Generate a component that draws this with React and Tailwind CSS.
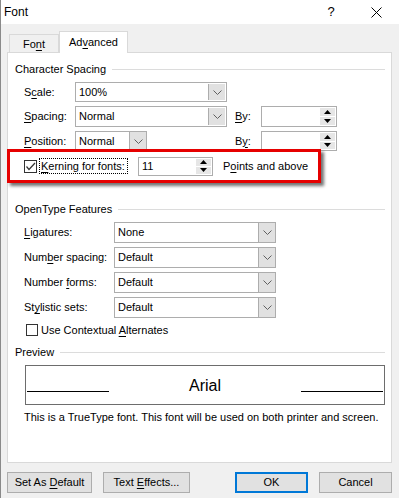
import React from "react";

const Chevron = () => (
  <svg width="9" height="5" viewBox="0 0 9 5">
    <polyline points="0.5,0.5 4.5,4.5 8.5,0.5" fill="none" stroke="#606060" strokeWidth="1" />
  </svg>
);

function Combo({ value, width, editable }) {
  return (
    <div className={`flex h-full border border-[#adadad] bg-white ${width}`}>
      <div className="flex-1 flex items-center pl-[3px]">
        <span>{value}</span>
      </div>
      <div
        className={`w-[17px] flex items-center justify-center bg-[#e1e1e1] border-l border-[#adadad] ${
          editable ? "m-px" : ""
        }`}
      >
        <Chevron />
      </div>
    </div>
  );
}

function Spin({ value, width, height }) {
  return (
    <div className={`flex border border-[#adadad] bg-white ${width} ${height}`}>
      <div className="flex-1 flex items-center pl-[3px]">
        <span>{value}</span>
      </div>
      <div className="w-[15px] flex flex-col m-px gap-px">
        <div className="flex-1 bg-[#e6e6e6] flex items-center justify-center">
          <svg width="7" height="4" viewBox="0 0 7 4">
            <polygon points="3.5,0 7,4 0,4" fill="#000" />
          </svg>
        </div>
        <div className="flex-1 bg-[#e6e6e6] flex items-center justify-center">
          <svg width="7" height="4" viewBox="0 0 7 4">
            <polygon points="0,0 7,0 3.5,4" fill="#000" />
          </svg>
        </div>
      </div>
    </div>
  );
}

function Header({ title }) {
  return (
    <div className="flex items-center h-[16px] pl-[7px] pr-[6px]">
      <span>{title}</span>
      <div className="flex-1 h-px bg-[#dcdcdc] ml-[6px]" />
    </div>
  );
}

function Btn({ children, width, ml, focused }) {
  return (
    <div
      className={`h-[21px] flex items-center justify-center bg-[#e1e1e1] ${width} ${ml} ${
        focused ? "border-2 border-[#0078d7]" : "border border-[#adadad]"
      }`}
    >
      <span>{children}</span>
    </div>
  );
}

const U = ({ children }) => <span className="underline underline-offset-[2px]">{children}</span>;

export default function App() {
  return (
    <div className="w-[399px] h-[498px] flex flex-col bg-[#f0f0f0] border-l border-[#8a8a8a] text-[11px] text-black whitespace-nowrap font-['Liberation_Sans',sans-serif] overflow-hidden">
      {/* title bar */}
      <div className="h-[24px] bg-white flex items-center shrink-0">
        <span className="pl-[3px] text-[12px]">Font</span>
        <div className="ml-auto flex h-full">
          <div className="w-[44px] flex items-center justify-center text-[13px]">?</div>
          <div className="w-[46px] flex items-center justify-center">
            <svg width="11" height="11" viewBox="0 0 11 11">
              <path d="M0.5 0.5 L10.5 10.5 M10.5 0.5 L0.5 10.5" stroke="#000" strokeWidth="1" />
            </svg>
          </div>
        </div>
      </div>

      {/* tabs */}
      <div className="mt-[7px] h-[22px] flex items-end pl-[8px] -mb-px relative z-10 shrink-0">
        <div className="w-[50px] h-[19px] border border-b-0 border-[#d9d9d9] flex items-center justify-center">
          <span>Fo<U>n</U>t</span>
        </div>
        <div className="w-[69px] h-[22px] bg-white border border-b-0 border-[#d9d9d9] flex items-center justify-center">
          <span>Ad<U>v</U>anced</span>
        </div>
      </div>

      {/* panel */}
      <div className="ml-[6px] w-[385px] h-[411px] bg-white border border-[#d9d9d9] flex flex-col shrink-0">
        <div className="mt-[8px]">
          <Header title="Character Spacing" />
        </div>

        <div className="mt-[5px] h-[20px] flex pl-[16px]">
          <div className="w-[51px] flex items-center"><span>S<U>c</U>ale:</span></div>
          <Combo value="100%" width="w-[152px]" editable />
        </div>

        <div className="mt-[4px] h-[21px] flex pl-[16px]">
          <div className="w-[51px] flex items-center"><span><U>S</U>pacing:</span></div>
          <Combo value="Normal" width="w-[152px]" editable />
          <div className="ml-[8px] w-[26px] flex items-center"><span><U>B</U>y:</span></div>
          <Spin value="" width="w-[76px]" height="h-[21px]" />
        </div>

        <div className="mt-[4px] h-[20px] flex pl-[16px]">
          <div className="w-[51px] flex items-center"><span><U>P</U>osition:</span></div>
          <Combo value="Normal" width="w-[72px]" />
          <div className="ml-[88px] w-[26px] flex items-center"><span>B<U>y</U>:</span></div>
          <Spin value="" width="w-[76px]" height="h-[20px]" />
        </div>

        {/* highlighted kerning row */}
        <div className="-mt-[2px] -ml-px w-[314px] h-[34px] border-[3px] border-[#e60000] bg-white shadow-[3px_3px_3px_rgba(0,0,0,0.55)] flex items-center pl-[14px] relative z-10">
          <div className="w-[13px] h-[13px] border border-[#333] bg-white flex items-center justify-center">
            <svg width="11" height="11" viewBox="0 0 11 11">
              <polyline points="1.5,5.5 4,8.5 10,2" fill="none" stroke="#333" strokeWidth="1.2" />
            </svg>
          </div>
          <div className="ml-[2px] w-[89px] h-[16px] border border-dotted border-black flex items-center pl-px">
            <span><U>K</U>erning for fonts:</span>
          </div>
          <div className="ml-[10px]">
            <Spin value="11" width="w-[75px]" height="h-[19px]" />
          </div>
          <div className="ml-[10px]">
            <span>P<U>o</U>ints and above</span>
          </div>
        </div>

        <div className="mt-[18px]">
          <Header title="OpenType Features" />
        </div>

        {[
          [<span key="l"><U>L</U>igatures:</span>, "None"],
          [<span key="n">Num<U>b</U>er spacing:</span>, "Default"],
          [<span key="f">Number <U>f</U>orms:</span>, "Default"],
          [<span key="s">St<U>y</U>listic sets:</span>, "Default"],
        ].map(([label, value], i) => (
          <div key={i} className={`h-[21px] flex pl-[16px] ${i === 0 ? "mt-[5px]" : "mt-[4px]"}`}>
            <div className="w-[90px] flex items-center">{label}</div>
            <Combo value={value} width="w-[162px]" />
          </div>
        ))}

        <div className="mt-[5px] h-[14px] flex items-center pl-[18px]">
          <div className="w-[12px] h-[12px] border border-[#333] bg-white" />
          <span className="ml-[3px]">Use Contextual <U>A</U>lternates</span>
        </div>

        <div className="mt-[7px]">
          <Header title="Preview" />
        </div>

        <div className="mt-[5px] ml-[17px] w-[360px] h-[40px] border border-[#6d6d6d] flex items-end pb-[12px] px-px">
          <div className="w-[82px] h-px bg-black" />
          <div className="flex-1 text-center text-[16px] leading-none mb-[-2px]">Arial</div>
          <div className="w-[82px] h-px bg-black" />
        </div>

        <div className="mt-[5px] h-[14px] flex items-center pl-[16px]">
          <span>This is a TrueType font. This font will be used on both printer and screen.</span>
        </div>
      </div>

      {/* buttons */}
      <div className="mt-[9px] flex">
        <Btn width="w-[85px]" ml="ml-[6px]">Set As <U>D</U>efault</Btn>
        <Btn width="w-[87px]" ml="ml-[11px]">Text <U>E</U>ffects...</Btn>
        <Btn width="w-[73px]" ml="ml-[45px]" focused>OK</Btn>
        <Btn width="w-[73px]" ml="ml-[11px]">Cancel</Btn>
      </div>
    </div>
  );
}
